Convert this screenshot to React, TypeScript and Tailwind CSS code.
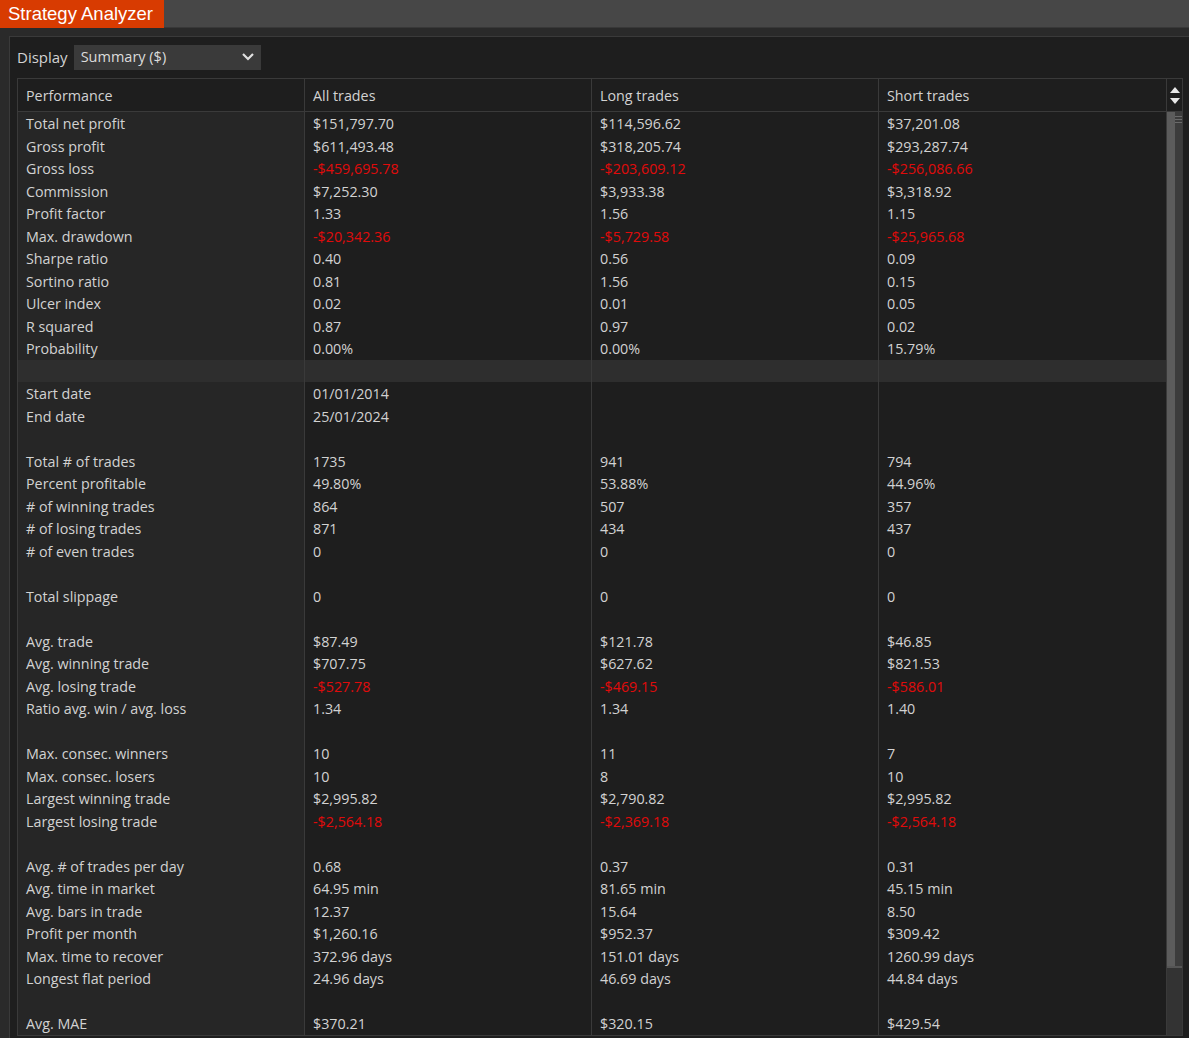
import React from "react";

type Row = { label: string; v: [string, string, string] } | null | "sep";

const rows: Row[] = [
  { label: "Total net profit", v: ["$151,797.70", "$114,596.62", "$37,201.08"] },
  { label: "Gross profit", v: ["$611,493.48", "$318,205.74", "$293,287.74"] },
  { label: "Gross loss", v: ["-$459,695.78", "-$203,609.12", "-$256,086.66"] },
  { label: "Commission", v: ["$7,252.30", "$3,933.38", "$3,318.92"] },
  { label: "Profit factor", v: ["1.33", "1.56", "1.15"] },
  { label: "Max. drawdown", v: ["-$20,342.36", "-$5,729.58", "-$25,965.68"] },
  { label: "Sharpe ratio", v: ["0.40", "0.56", "0.09"] },
  { label: "Sortino ratio", v: ["0.81", "1.56", "0.15"] },
  { label: "Ulcer index", v: ["0.02", "0.01", "0.05"] },
  { label: "R squared", v: ["0.87", "0.97", "0.02"] },
  { label: "Probability", v: ["0.00%", "0.00%", "15.79%"] },
  "sep",
  { label: "Start date", v: ["01/01/2014", "", ""] },
  { label: "End date", v: ["25/01/2024", "", ""] },
  null,
  { label: "Total # of trades", v: ["1735", "941", "794"] },
  { label: "Percent profitable", v: ["49.80%", "53.88%", "44.96%"] },
  { label: "# of winning trades", v: ["864", "507", "357"] },
  { label: "# of losing trades", v: ["871", "434", "437"] },
  { label: "# of even trades", v: ["0", "0", "0"] },
  null,
  { label: "Total slippage", v: ["0", "0", "0"] },
  null,
  { label: "Avg. trade", v: ["$87.49", "$121.78", "$46.85"] },
  { label: "Avg. winning trade", v: ["$707.75", "$627.62", "$821.53"] },
  { label: "Avg. losing trade", v: ["-$527.78", "-$469.15", "-$586.01"] },
  { label: "Ratio avg. win / avg. loss", v: ["1.34", "1.34", "1.40"] },
  null,
  { label: "Max. consec. winners", v: ["10", "11", "7"] },
  { label: "Max. consec. losers", v: ["10", "8", "10"] },
  { label: "Largest winning trade", v: ["$2,995.82", "$2,790.82", "$2,995.82"] },
  { label: "Largest losing trade", v: ["-$2,564.18", "-$2,369.18", "-$2,564.18"] },
  null,
  { label: "Avg. # of trades per day", v: ["0.68", "0.37", "0.31"] },
  { label: "Avg. time in market", v: ["64.95 min", "81.65 min", "45.15 min"] },
  { label: "Avg. bars in trade", v: ["12.37", "15.64", "8.50"] },
  { label: "Profit per month", v: ["$1,260.16", "$952.37", "$309.42"] },
  { label: "Max. time to recover", v: ["372.96 days", "151.01 days", "1260.99 days"] },
  { label: "Longest flat period", v: ["24.96 days", "46.69 days", "44.84 days"] },
  null,
  { label: "Avg. MAE", v: ["$370.21", "$320.15", "$429.54"] },
];

const font = { fontFamily: '"Open Sans", "Noto Sans", sans-serif' };

function Cell({ text }: { text: string }) {
  const neg = text.startsWith("-");
  return (
    <div className="h-[22.5px] flex items-center pl-[8px] pt-[1px] border-l border-[#3a3a3a] whitespace-nowrap">
      <span className={neg ? "text-[#e00b0b]" : "text-[#d2d2d2]"}>{text}</span>
    </div>
  );
}

export default function App() {
  return (
    <div className="w-[1189px] h-[1038px] bg-[#2a2a2a] overflow-hidden flex flex-col" style={font}>
      <div className="h-[28px] bg-[#474747] flex shrink-0 border-b border-[#383838]">
        <div
          className="w-[164px] h-[28px] bg-[#d83b01] text-white text-[18.5px] flex items-center pl-[8px]"
          style={{ fontFamily: '"Liberation Sans", Arial, sans-serif' }}
        >
          Strategy Analyzer
        </div>
      </div>
      <div className="flex-1 pt-[8px] pl-[9px]">
        <div className="h-full bg-[#1e1e1e] border-t border-l border-[#3a3a3a] pl-[7px] pt-[7px]">
          <div className="flex items-center h-[26px] gap-[6px]">
            <span className="text-[#d2d2d2] text-[15px]">Display</span>
            <div className="w-[187px] h-[25px] bg-[#3a3a3a] flex items-center justify-between pl-[7px] pr-[6px] text-[#dcdcdc] text-[14.5px]">
              <span>Summary ($)</span>
              <svg width="14" height="10" viewBox="0 0 14 10">
                <path d="M2 2 L7 7 L12 2" fill="none" stroke="#e0e0e0" strokeWidth="2.2" />
              </svg>
            </div>
          </div>
          <div className="mt-[8px] w-[1166px] border border-[#3a3a3a] flex text-[14.3px]">
            <div className="w-[1148px]">
              <div className="h-[33px] grid grid-cols-[286px_287px_287px_288px] border-b border-[#3a3a3a] text-[#d2d2d2]">
                <div className="flex items-center pl-[8px] pt-[2px]">Performance</div>
                <div className="flex items-center pl-[8px] pt-[2px] border-l border-[#3a3a3a]">All trades</div>
                <div className="flex items-center pl-[8px] pt-[2px] border-l border-[#3a3a3a]">Long trades</div>
                <div className="flex items-center pl-[8px] pt-[2px] border-l border-[#3a3a3a]">Short trades</div>
              </div>
              <div className="grid grid-cols-[286px_287px_287px_288px]">
                {rows.map((r, i) => {
                  if (r === "sep") {
                    return (
                      <React.Fragment key={i}>
                        <div className="h-[22.5px] bg-[#2e2e2e]" />
                        <div className="h-[22.5px] bg-[#2e2e2e] border-l border-[#3a3a3a]" />
                        <div className="h-[22.5px] bg-[#2e2e2e] border-l border-[#3a3a3a]" />
                        <div className="h-[22.5px] bg-[#2e2e2e] border-l border-[#3a3a3a]" />
                      </React.Fragment>
                    );
                  }
                  if (r === null) {
                    return (
                      <React.Fragment key={i}>
                        <div className="h-[22.5px] bg-[#262626]" />
                        <Cell text="" />
                        <Cell text="" />
                        <Cell text="" />
                      </React.Fragment>
                    );
                  }
                  return (
                    <React.Fragment key={i}>
                      <div className="h-[22.5px] bg-[#262626] flex items-center pl-[8px] pt-[1px] text-[#d2d2d2] whitespace-nowrap">
                        {r.label}
                      </div>
                      <Cell text={r.v[0]} />
                      <Cell text={r.v[1]} />
                      <Cell text={r.v[2]} />
                    </React.Fragment>
                  );
                })}
              </div>
            </div>
            <div className="w-[16px] border-l border-[#3a3a3a] flex flex-col">
              <div className="h-[33px] flex flex-col items-center justify-center gap-[5px] border-b border-[#3a3a3a]">
                <svg width="10" height="6" viewBox="0 0 10 6"><path d="M0 6 L5 0 L10 6 Z" fill="#e8e8e8" /></svg>
                <svg width="10" height="6" viewBox="0 0 10 6"><path d="M0 0 L5 6 L10 0 Z" fill="#e8e8e8" /></svg>
              </div>
              <div className="flex-1 flex flex-col bg-[#333333]">
                <div className="h-[856px] flex relative">
                  <div className="w-[8px] bg-[#5c5c5c]" />
                  <div className="flex-1 bg-[#3c3c3c]" />
                  <div className="absolute left-[8px] top-[4px] w-[7px] flex flex-col gap-[2px]">
                    <div className="h-[1px] bg-[#6a6a6a]" />
                    <div className="h-[1px] bg-[#6a6a6a]" />
                    <div className="h-[1px] bg-[#6a6a6a]" />
                  </div>
                  <div className="absolute left-0 bottom-0 w-full h-[2px] bg-[#555]" />
                </div>
                <div className="flex-1" />
              </div>
            </div>
          </div>
        </div>
      </div>
    </div>
  );
}
